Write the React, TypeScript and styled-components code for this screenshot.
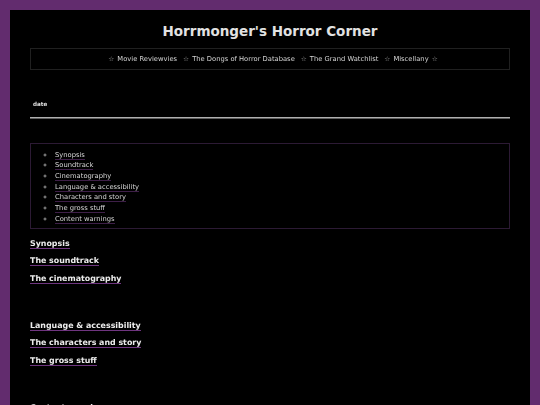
import React from "react";
import styled, { createGlobalStyle } from "styled-components";

const GlobalStyle = createGlobalStyle`
  html, body {
    margin: 0;
    padding: 0;
    background-color: #622c6e;
  }
  body {
    font-family: "DejaVu Sans", Verdana, sans-serif;
    font-size: 6.75px;
    color: #cccccc;
    -webkit-font-smoothing: antialiased;
  }
`;

const Page = styled.div`
  margin: 10px 10px 0 10px;
  min-height: 395px;
  background-color: #000;
  padding: 13px 20px 0 20px;
  box-sizing: border-box;
  display: flex;
  flex-direction: column;
`;

const Title = styled.h1`
  margin: 0;
  font-size: 13.5px;
  line-height: 16px;
  font-weight: bold;
  text-align: center;
  color: #e2e2e2;
`;

const Nav = styled.nav`
  margin-top: 9px;
  height: 22px;
  border: 1px solid #2c1a34;
  box-sizing: border-box;
  display: flex;
  align-items: center;
  justify-content: center;
  white-space: pre;
  filter: grayscale(1);
`;

const Star = styled.span<{ $last?: boolean }>`
  color: #9a9a9a;
  margin: ${({ $last }) => ($last ? "0 0 0 3px" : "0 3px 0 6px")};
`;

const NavLink = styled.a`
  color: #d4d4d4;
  text-decoration: none;
`;

const DateLabel = styled.h5`
  margin: 31px 0 0 3px;
  font-size: 5.6px;
  line-height: 7px;
  font-weight: bold;
  color: #e0e0e0;
  filter: grayscale(1);
`;

const Rule = styled.hr`
  margin: 9px 0 0 0;
  height: 0;
  border: none;
  border-top: 1px solid #b0b0b0;
  border-bottom: 1px solid #5e5e5e;
`;

const Contents = styled.div`
  margin-top: 24px;
  border: 1px solid #2c1a34;
  padding: 5.5px 0 4px 0;
`;

const ContentsList = styled.ul`
  margin: 0;
  padding-left: 24px;
  list-style: circle;
  line-height: 10.7px;

  li::marker {
    color: #9a9a9a;
  }
`;

const ContentsLink = styled.a`
  color: #d6d6d6;
  text-decoration: none;
  border-bottom: 1px solid #3e1f48;
`;

const LinkText = styled.span`
  filter: grayscale(1);
`;

const Sections = styled.div`
  margin-top: 9.5px;
  display: flex;
  flex-direction: column;
  gap: 37.5px;
`;

const SectionGroup = styled.div`
  display: flex;
  flex-direction: column;
  gap: 8px;
`;

const SectionHeading = styled.h3`
  margin: 0;
  font-size: 7.9px;
  line-height: 9.5px;
  height: 9.5px;
  font-weight: bold;
  color: #ececec;
`;

const HeadingLink = styled.a`
  color: inherit;
  text-decoration: none;
  border-bottom: 1px solid #6f3580;
`;

const HeadingInk = styled.span`
  filter: grayscale(1);
`;

const navItems = [
  "Movie Reviewvies",
  "The Dongs of Horror Database",
  "The Grand Watchlist",
  "Miscellany",
];

const contents = [
  "Synopsis",
  "Soundtrack",
  "Cinematography",
  "Language & accessibility",
  "Characters and story",
  "The gross stuff",
  "Content warnings",
];

const sectionGroups = [
  ["Synopsis", "The soundtrack", "The cinematography"],
  ["Language & accessibility", "The characters and story", "The gross stuff"],
  ["Content warnings"],
];

export default function App() {
  return (
    <>
      <GlobalStyle />
      <Page>
        <Title>Horrmonger's Horror Corner</Title>
        <Nav>
          {navItems.map((item) => (
            <React.Fragment key={item}>
              <Star>☆</Star>
              <NavLink href="#">{item}</NavLink>
            </React.Fragment>
          ))}
          <Star $last>☆</Star>
        </Nav>
        <DateLabel>date</DateLabel>
        <Rule />
        <Contents>
          <ContentsList>
            {contents.map((item) => (
              <li key={item}>
                <ContentsLink href="#">
                  <LinkText>{item}</LinkText>
                </ContentsLink>
              </li>
            ))}
          </ContentsList>
        </Contents>
        <Sections>
          {sectionGroups.map((group, i) => (
            <SectionGroup key={i}>
              {group.map((heading) => (
                <SectionHeading key={heading}>
                  <HeadingLink>
                    <HeadingInk>{heading}</HeadingInk>
                  </HeadingLink>
                </SectionHeading>
              ))}
            </SectionGroup>
          ))}
        </Sections>
      </Page>
    </>
  );
}
